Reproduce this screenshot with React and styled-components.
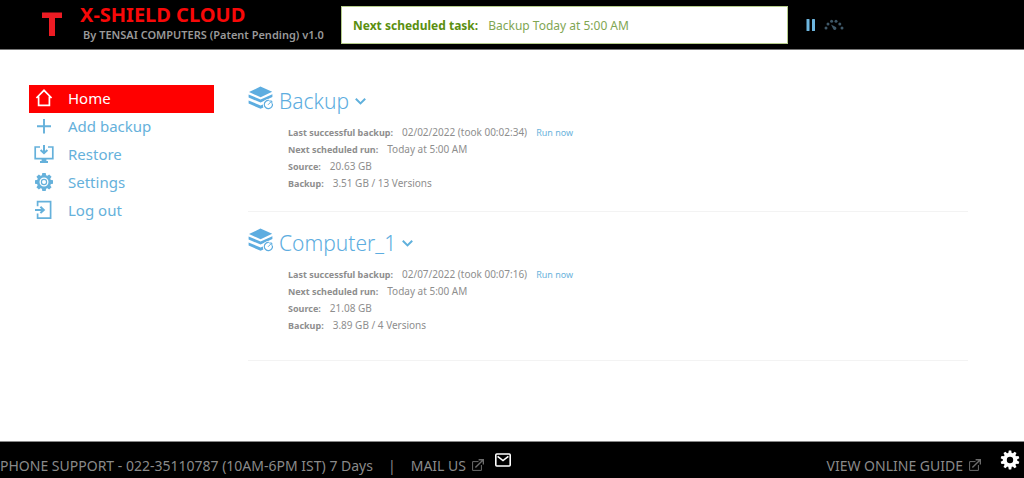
import React from 'react';
import styled, { createGlobalStyle } from 'styled-components';

const nav = [
  { label: 'Home', icon: 'home', active: true },
  { label: 'Add backup', icon: 'add' },
  { label: 'Restore', icon: 'restore' },
  { label: 'Settings', icon: 'settings' },
  { label: 'Log out', icon: 'logout' },
];

const jobs = [
  {
    name: 'Backup',
    last: '02/02/2022 (took 00:02:34)',
    next: 'Today at 5:00 AM',
    source: '20.63 GB',
    backup: '3.51 GB / 13 Versions',
  },
  {
    name: 'Computer_1',
    last: '02/07/2022 (took 00:07:16)',
    next: 'Today at 5:00 AM',
    source: '21.08 GB',
    backup: '3.89 GB / 4 Versions',
  },
];

// Nav gear: open ring with a small circle in the hub
const SettingsIcon = () => (
  <svg width="20" height="20" viewBox="0 0 20 20" fill="none">
    <circle cx="10" cy="10" r="5.8" stroke="currentColor" strokeWidth="2.6" />
    {[0, 45, 90, 135, 180, 225, 270, 315].map((deg) => (
      <path key={deg} d="M7.8 4 L8.3 1 H11.7 L12.2 4 Z" fill="currentColor" transform={`rotate(${deg} 10 10)`} />
    ))}
    <circle cx="10" cy="10" r="2.6" stroke="currentColor" strokeWidth="1.2" />
  </svg>
);

// Footer gear: solid body
const OptionsIcon = () => (
  <svg width="20" height="20" viewBox="0 0 20 20" fill="none">
    <circle cx="10" cy="10" r="5.2" stroke="currentColor" strokeWidth="4" />
    {[0, 36, 72, 108, 144, 180, 216, 252, 288, 324].map((deg) => (
      <path key={deg} d="M8.2 3.8 L8.8 0.6 H11.2 L11.8 3.8 Z" fill="currentColor" transform={`rotate(${deg} 10 10)`} />
    ))}
  </svg>
);

const NavIcon = ({ name }) => {
  if (name === 'settings') return <SettingsIcon />;
  return (
    <svg width="20" height="20" viewBox="0 0 20 20" fill="none" stroke="currentColor" strokeWidth="1.7">
      {name === 'home' && <path d="M2.4 10 L10 2.3 L17.6 10 M4.6 8.4 V17.4 H15.4 V8.4" />}
      {name === 'add' && <path d="M10 3 V17.4 M3 10.2 H17" strokeWidth="1.9" />}
      {name === 'restore' && (
        <>
          <path d="M6 3 H1.2 V14.6 H18.8 V3 H14" />
          <path d="M10 1 V9 M6.6 6 L10 9.2 L13.4 6" strokeWidth="2" />
          <path d="M7.6 15 H12.4 V17 H14 V19 H6 V17 H7.6 Z" fill="currentColor" stroke="none" />
        </>
      )}
      {name === 'logout' && (
        <>
          <path d="M3.6 6.2 V1.6 H16.6 V18.2 H3.6 V13.6" />
          <path d="M1 9.9 H9.4 M6.4 6.8 L9.8 9.9 L6.4 13" strokeWidth="2" />
        </>
      )}
    </svg>
  );
};

const StackIcon = () => (
  <svg width="26" height="25" viewBox="0 0 26 25">
    <g fill="currentColor">
      <path d="M12.4 1.6 L24.2 6.8 L12.6 12.2 L1 7 Z" />
      <path d="M0.6 9.4 L12.6 14.6 L24.4 9.2 V12 L12.6 17.6 L0.6 12.6 Z" />
      <path d="M0.6 15.4 L12.6 20.6 L15 19.6 L15.4 22.6 L12.6 23.8 L0.6 18.6 Z" />
    </g>
    <circle cx="20.4" cy="19.4" r="5.4" fill="#fff" />
    <path d="M24.4 18.6 A4.1 4.1 0 1 1 20.8 15.4" fill="none" stroke="currentColor" strokeWidth="1.2" />
    <path d="M20 19.8 L23.6 16.2 M23.8 18.6 V16 H21.2" fill="none" stroke="currentColor" strokeWidth="1" />
  </svg>
);

const ExternalIcon = () => (
  <svg width="12" height="12" viewBox="0 0 12 12" fill="none" stroke="#6c6c6c" strokeWidth="1">
    <path d="M6.5 2.6 H0.6 V11.4 H9.4 V6" />
    <path d="M3.4 8.4 L10.8 1.2 M6.6 0.7 H11.4 V5.4" strokeWidth="1.4" />
  </svg>
);

const App = () => {
  return (
    <Page>
      <GlobalStyle />
      <Header>
        <Brand>
          <svg width="20" height="24" viewBox="0 0 20 24">
            <path d="M0 0.5 H20 V6 H13 V24 H7 V6 H0 Z" fill="#ed1c24" />
          </svg>
          <div>
            <h1>X-SHIELD CLOUD</h1>
            <p>By TENSAI COMPUTERS (Patent Pending) v1.0</p>
          </div>
        </Brand>
        <Task>
          <strong>Next scheduled task:</strong>
          <span>Backup Today at 5:00 AM</span>
        </Task>
        <Controls>
          <IconButton aria-label="Pause">
            <svg width="10" height="12" viewBox="0 0 10 12" fill="#6db5de">
              <rect x="0.5" width="3" height="12" rx="0.6" />
              <rect x="6" width="3" height="12" rx="0.6" />
            </svg>
          </IconButton>
          <IconButton aria-label="Throttle">
            <svg width="20" height="11" viewBox="0 0 20 11" fill="#3f5868">
              <circle cx="2" cy="9" r="1.5" />
              <circle cx="4" cy="4.9" r="1.5" />
              <circle cx="7.6" cy="2.3" r="1.5" />
              <circle cx="12" cy="2.3" r="1.5" />
              <circle cx="15.8" cy="4.9" r="1.5" />
              <circle cx="18" cy="9" r="1.5" />
              <path d="M7 5.4 L11.8 8 A1.7 1.7 0 1 1 9 9.6 Z" />
            </svg>
          </IconButton>
        </Controls>
      </Header>

      <Main>
        <Nav>
          {nav.map((item) => (
            <NavLink key={item.label} href="#" $active={item.active}>
              <NavIcon name={item.icon} />
              {item.label}
            </NavLink>
          ))}
        </Nav>
        <Jobs>
          {jobs.map((job) => (
            <Job key={job.name}>
              <JobTitle>
                <StackIcon />
                <h2>{job.name}</h2>
                <IconButton aria-label={`${job.name} menu`}>
                  <svg width="11" height="7" viewBox="0 0 11 7" fill="none" stroke="#5fb0dc" strokeWidth="2">
                    <path d="M0.8 0.8 L5.5 5.4 L10.2 0.8" />
                  </svg>
                </IconButton>
              </JobTitle>
              <Details>
                <div>
                  <dt>Last successful backup:</dt>
                  <dd>{job.last}</dd>
                  <dd><a href="#">Run now</a></dd>
                </div>
                <div>
                  <dt>Next scheduled run:</dt>
                  <dd>{job.next}</dd>
                </div>
                <div>
                  <dt>Source:</dt>
                  <dd>{job.source}</dd>
                </div>
                <div>
                  <dt>Backup:</dt>
                  <dd>{job.backup}</dd>
                </div>
              </Details>
            </Job>
          ))}
        </Jobs>
      </Main>

      <Footer>
        <Support>
          <span>PHONE SUPPORT - 022-35110787 (10AM-6PM IST) 7 Days</span>
          <span>|</span>
          <FooterLink href="#">MAIL US <ExternalIcon /></FooterLink>
        </Support>
        <IconButton aria-label="Mail">
          <svg width="16" height="14" viewBox="0 0 16 14" fill="none" stroke="#fff" strokeWidth="1.6">
            <rect x="0.8" y="1" width="14.4" height="12" rx="1" />
            <path d="M2.6 3.4 L8 7.6 L13.4 3.4" />
          </svg>
        </IconButton>
        <Guide>
          <FooterLink href="#">VIEW ONLINE GUIDE <ExternalIcon /></FooterLink>
        </Guide>
        <IconButton aria-label="Options">
          <OptionsIcon />
        </IconButton>
      </Footer>
    </Page>
  );
};

const GlobalStyle = createGlobalStyle`
* {
  box-sizing: border-box;
  margin: 0;
  padding: 0;
}
body {
  background: #fff;
  font-family: "Noto Sans", "Open Sans", sans-serif;
}
a {
  color: #6bb3dc;
  text-decoration: none;
}
svg {
  display: block;
  flex: none;
}
`;

const Page = styled.div`
  min-height: 100vh;
  display: flex;
  flex-direction: column;
`;

const Header = styled.header`
  display: grid;
  grid-template-columns: minmax(341px, 1fr) minmax(0, 447px) minmax(0, 236px);
  align-items: center;
  height: 50px;
  background: #000;
  border-bottom: 1px solid #777;
`;

const Brand = styled.div`
  display: flex;
  align-items: center;
  gap: 18px;
  padding: 0 0 1px 42px;
  white-space: nowrap;
  h1 {
    color: #f80808;
    font-size: 20px;
    line-height: 22px;
    font-weight: 700;
  }
  p {
    padding-left: 3px;
    color: #999;
    font-size: 11px;
    line-height: 18px;
    font-weight: 600;
  }
`;

const Task = styled.div`
  display: flex;
  align-items: center;
  gap: 10px;
  height: 38px;
  padding: 2px 11px 0;
  background: #fff;
  border: 1px solid #b5cc8a;
  color: #7fa653;
  font-size: 12px;
  white-space: nowrap;
  strong {
    color: #5b8f10;
  }
`;

const Controls = styled.div`
  display: flex;
  align-items: center;
  gap: 8px;
  padding-left: 18px;
`;

const IconButton = styled.button`
  display: flex;
  border: 0;
  background: none;
  color: #fff;
  cursor: pointer;
`;

const Main = styled.main`
  flex: 1;
  display: flex;
  gap: 34px;
  padding: 35px 56px 20px 29px;
`;

const Nav = styled.nav`
  flex: none;
  width: 185px;
`;

const NavLink = styled.a`
  display: flex;
  align-items: center;
  gap: 14px;
  height: 28px;
  padding: 0 0 2px 5px;
  background: ${(props) => (props.$active ? '#ff0000' : 'transparent')};
  color: ${(props) => (props.$active ? '#fff' : '#65b1db')};
  font-size: 15px;
`;

const Jobs = styled.div`
  flex: 1;
`;

const Job = styled.section`
  height: 127px;
  border-bottom: 1px solid #f3f3f3;
  & + & {
    height: 134px;
    margin-top: 15px;
  }
`;

const JobTitle = styled.div`
  display: flex;
  align-items: center;
  height: 32px;
  color: #5dade0;
  > svg {
    align-self: flex-start;
  }
  h2 {
    margin: 0 6px 0 5px;
    font-size: 21px;
    line-height: 32px;
    font-weight: 300;
  }
`;

const Details = styled.dl`
  padding: 7px 0 0 40px;
  color: #8e8e8e;
  font-size: 10px;
  line-height: 17px;
  div {
    display: flex;
    gap: 9px;
  }
  dt {
    font-size: 9px;
    font-weight: 700;
  }
  a {
    font-size: 9px;
  }
`;

const Footer = styled.footer`
  display: flex;
  align-items: center;
  height: 37px;
  padding-right: 4px;
  background: #000;
  border-top: 1px solid #888;
  color: #8a8a8a;
  font-size: 14px;
  white-space: nowrap;
`;

const Support = styled.div`
  display: flex;
  gap: 15px;
  padding: 10px 11px 0 0;
`;

const FooterLink = styled.a`
  display: flex;
  align-items: center;
  gap: 6px;
  color: inherit;
`;

const Guide = styled.div`
  margin-left: auto;
  padding: 10px 19px 0 0;
`;

export default App;
